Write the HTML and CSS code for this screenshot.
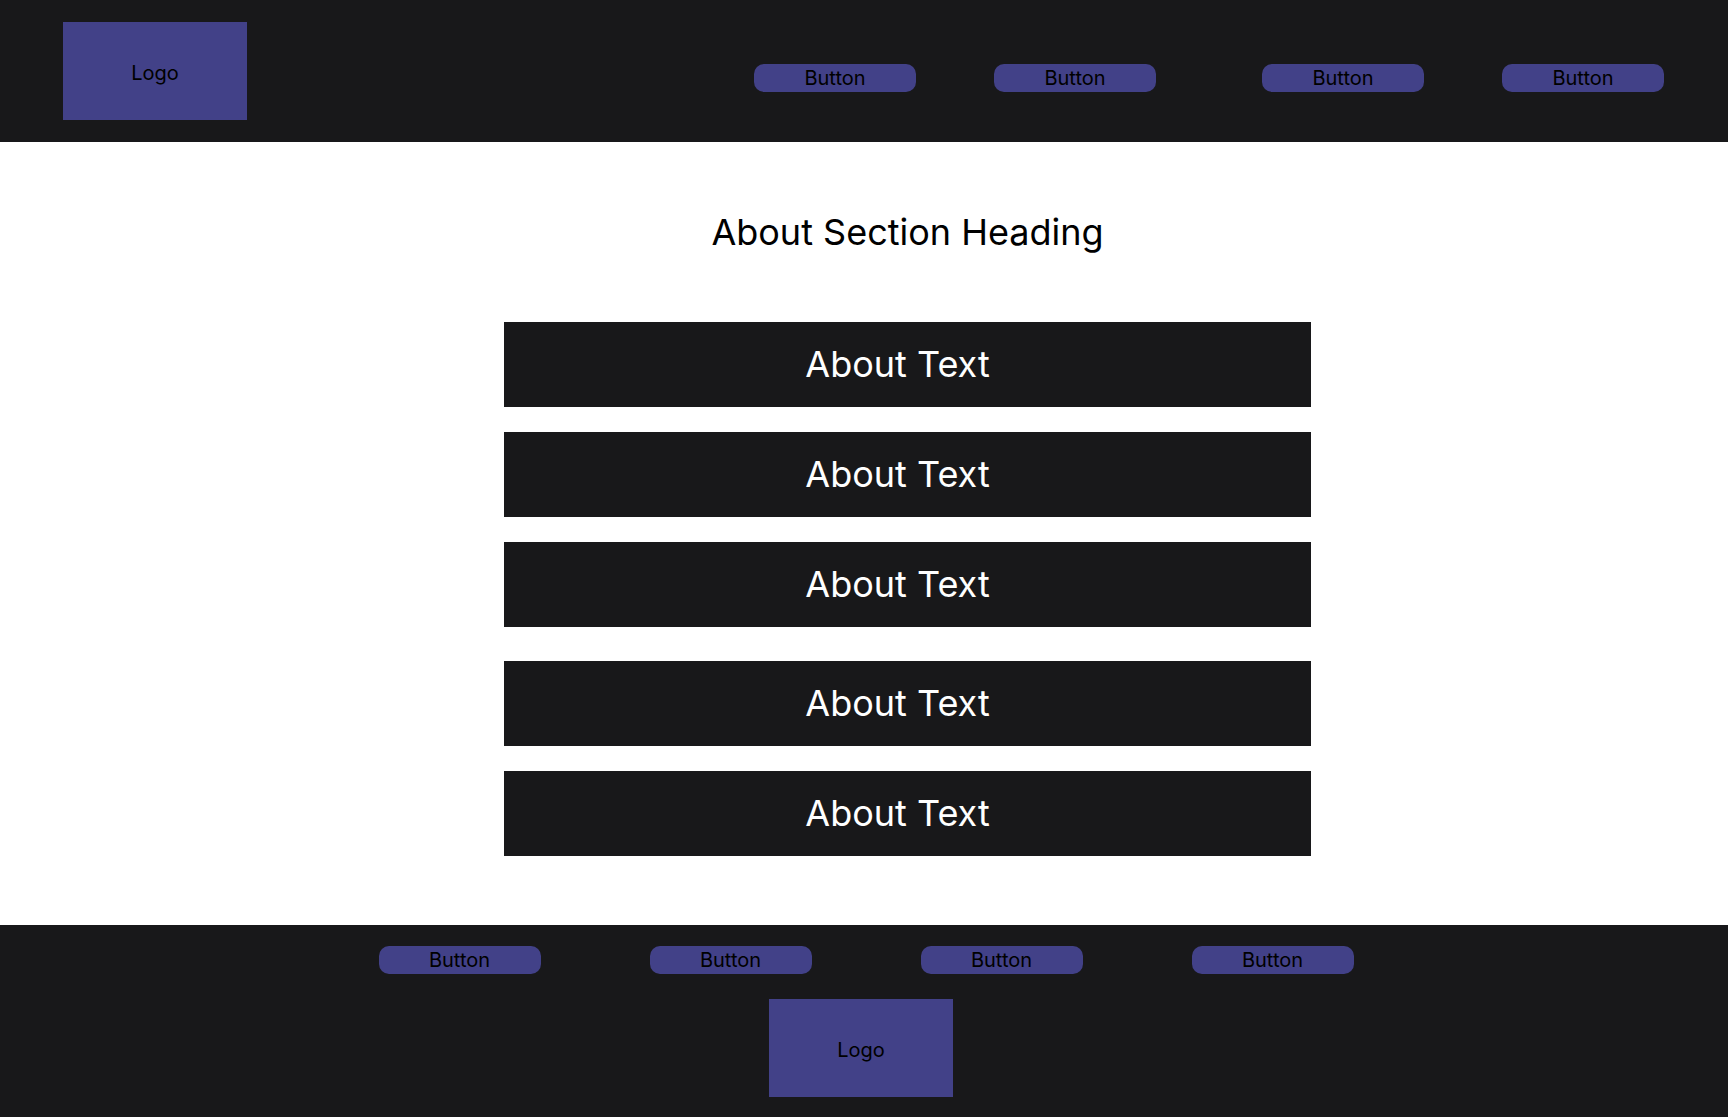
FILE: index.html
```html
<!DOCTYPE html>
<html lang="en">
<head>
  <meta charset="utf-8">
  <meta name="viewport" content="width=device-width, initial-scale=1">
  <title>About</title>
  <link rel="stylesheet" href="styles.css">
</head>
<body>
  <header class="site-header">
    <a class="logo" href="#">Logo</a>
    <nav class="header-nav" aria-label="Main">
      <div class="nav-pair">
        <button class="button" type="button">Button</button>
        <button class="button" type="button">Button</button>
      </div>
      <div class="nav-pair">
        <button class="button" type="button">Button</button>
        <button class="button" type="button">Button</button>
      </div>
    </nav>
  </header>

  <main class="about">
    <h1 class="about-heading">About Section Heading</h1>
    <div class="about-groups">
      <div class="about-group">
        <p class="about-text">About Text</p>
        <p class="about-text">About Text</p>
        <p class="about-text">About Text</p>
      </div>
      <div class="about-group">
        <p class="about-text">About Text</p>
        <p class="about-text">About Text</p>
      </div>
    </div>
  </main>

  <footer class="site-footer">
    <nav class="footer-nav" aria-label="Footer">
      <button class="button" type="button">Button</button>
      <button class="button" type="button">Button</button>
      <button class="button" type="button">Button</button>
      <button class="button" type="button">Button</button>
    </nav>
    <a class="logo" href="#">Logo</a>
  </footer>
</body>
</html>
```
FILE: styles.css
```css
:root {
  --dark: #18181a;
  --accent: #424188;
}

* {
  box-sizing: border-box;
}

body {
  display: flex;
  flex-direction: column;
  min-height: 100vh;
  margin: 0;
  background: #fff;
  color: #000;
  font-family: Inter, "Liberation Sans", sans-serif;
  font-size: 20px;
  line-height: 24px;
}

.logo {
  display: flex;
  flex: none;
  align-items: center;
  justify-content: center;
  width: 184px;
  height: 98px;
  padding-top: 3px;
  background: var(--accent);
  color: #000;
  text-decoration: none;
}

.button {
  width: 162px;
  height: 28px;
  padding: 0;
  border: 0;
  border-radius: 10px;
  background: var(--accent);
  color: #000;
  font: inherit;
  cursor: pointer;
}

/* Header */
.site-header {
  display: flex;
  align-items: center;
  justify-content: space-between;
  padding: 22px 64px 22px 63px;
  background: var(--dark);
}

.header-nav {
  display: flex;
  gap: 106px;
  padding-top: 14px;
}

.nav-pair {
  display: flex;
  gap: 78px;
}

/* About section */
.about {
  display: flex;
  flex: 1;
  flex-direction: column;
  align-items: center;
  gap: 68px;
  padding: 68px 0 69px 87px;
}

.about-heading {
  margin: 0;
  font-size: 36px;
  font-weight: 400;
  line-height: 44px;
}

.about-groups {
  display: flex;
  flex-direction: column;
  gap: 34px;
  width: 100%;
  max-width: 807px;
}

.about-group {
  display: flex;
  flex-direction: column;
  gap: 25px;
}

.about-text {
  margin: 0;
  padding: 20px 20px 21px 0;
  background: var(--dark);
  color: #fff;
  font-size: 36px;
  line-height: 44px;
  text-align: center;
}

/* Footer */
.site-footer {
  display: flex;
  flex-direction: column;
  align-items: center;
  gap: 25px;
  padding: 21px 6px 20px 0;
  background: var(--dark);
}

.footer-nav {
  display: flex;
  gap: 109px;
  padding-left: 10px;
}
```
